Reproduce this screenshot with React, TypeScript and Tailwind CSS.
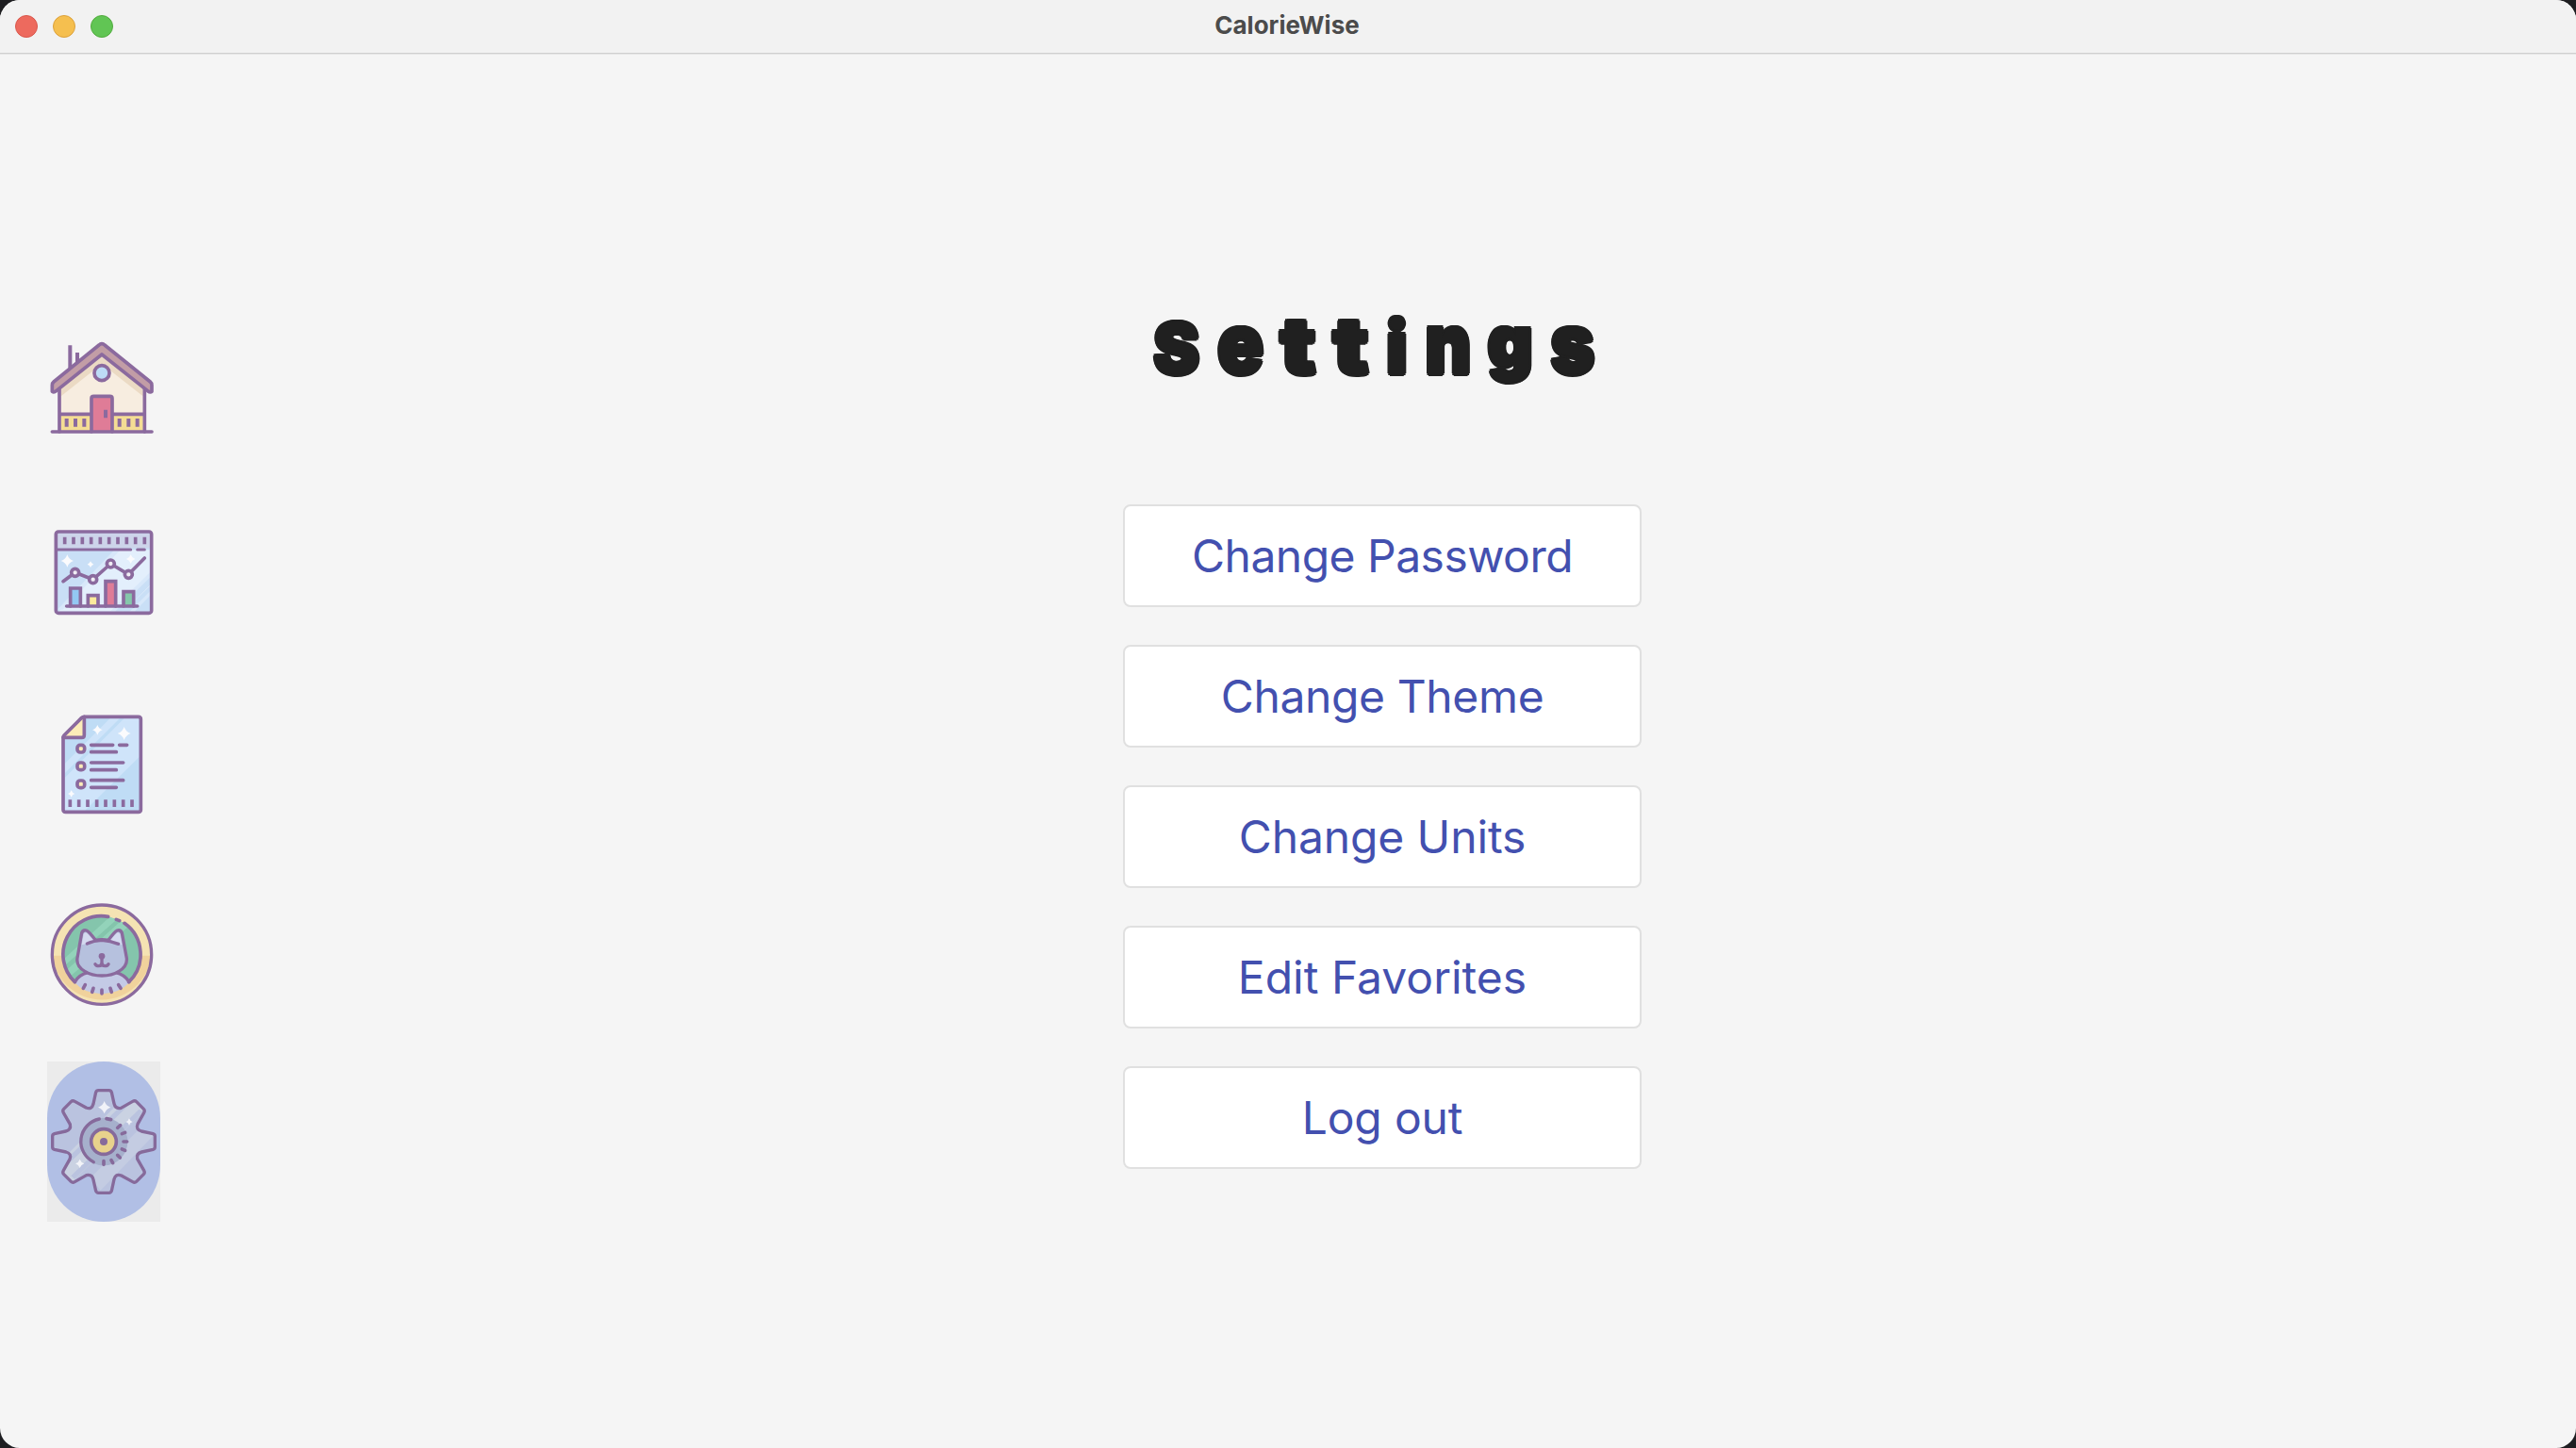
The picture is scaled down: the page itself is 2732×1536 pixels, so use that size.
import React from "react";

const LINE = "#8b6a9e";

const BUTTONS = [
  { label: "Change Password", tracking: "tracking-[-0.52px]" },
  { label: "Change Theme", tracking: "tracking-[-0.38px]" },
  { label: "Change Units", tracking: "tracking-[-0.12px]" },
  { label: "Edit Favorites", tracking: "tracking-normal" },
  { label: "Log out", tracking: "tracking-[-0.15px]" },
];

// Each letter of the display heading is sized and condensed on its own.
const HEADING = [
  { ch: "S", cls: "w-[68.4px] text-[74px]", glyph: "scale-x-[0.99] -translate-x-px" },
  { ch: "e", cls: "w-[66px] text-[88px]", glyph: "scale-x-[0.92]" },
  { ch: "t", cls: "w-[54.4px] text-[82px]", glyph: "scale-x-[1.15]" },
  { ch: "t", cls: "w-[57.8px] text-[82px]", glyph: "scale-x-[1.15]" },
  { ch: "i", cls: "w-[39.8px] text-[77px]", glyph: "scale-x-[0.98]" },
  { ch: "n", cls: "w-[69.2px] text-[89px]", glyph: "scale-x-[0.85]" },
  { ch: "g", cls: "w-[61.8px] text-[76px]", glyph: "scale-x-[0.97] -translate-y-[7px]" },
  { ch: "s", cls: "w-[71.2px] text-[88px]", glyph: "scale-x-[0.91]" },
];

function Sparkle({ x, y, r }: { x: number; y: number; r: number }) {
  const k = r * 0.25;
  return (
    <path
      fill="#fbfbfd"
      stroke="none"
      d={`M${x} ${y - r}Q${x + k} ${y - k} ${x + r} ${y}Q${x + k} ${y + k} ${x} ${y + r}Q${x - k} ${y + k} ${x - r} ${y}Q${x - k} ${y - k} ${x} ${y - r}Z`}
    />
  );
}

function HouseIcon() {
  return (
    <svg viewBox="30 3 360 360" className="size-[120px]" fill="none" stroke={LINE} strokeWidth="11" strokeLinecap="round" strokeLinejoin="round">
      <path d="M69 185L204 80L340 185V324H69Z" fill="#f7ede0" stroke="none" />
      <path d="M74 185L204 84L335 185V211L204 108L74 211Z" fill="#ebdac4" stroke="none" />
      <path d="M74 268H168V320H74ZM241 268H335V320H241Z" fill="#f4dd94" stroke="none" />
      <path d="M103 49V120M126 72V104" strokeLinecap="butt" strokeWidth="12" />
      <path d="M204 44Q209 44 213 48L358 165Q363 169 363 176V196Q358 200 350 194L204 78L59 194Q52 200 46 196V176Q46 169 51 165L195 48Q199 44 204 44Z" fill="#c29da6" />
      <path d="M69 188V324M340 188V324M69 268H168M241 268H340" />
      <path d="M171 324V218Q171 211 178 211H230Q237 211 237 218V324" fill="#df7c97" />
      <path d="M46 324H363" />
      <circle cx="204" cy="137" r="24" fill="#bddcf6" />
      <path d="M216 260V274M92 288V302M120 288V302M148 288V302M260 288V302M289 288V302M317 288V302" strokeWidth="12" strokeLinecap="square" strokeLinejoin="miter" />
    </svg>
  );
}

function ChartIcon() {
  return (
    <svg viewBox="30 3 360 360" className="size-[120px]" fill="none" stroke={LINE} strokeWidth="11" strokeLinecap="round" strokeLinejoin="round">
      <rect x="58" y="42" width="304" height="259" rx="10" fill="#c9dff6" stroke="none" />
      <path d="M262 100H357V215L272 296H66Z" fill="#e3effc" stroke="none" />
      <path d="M244 100H262L80 290H62ZM357 172V212L272 296H230ZM357 232V246L308 296H292Z" fill="#d8e8fa" stroke="none" />
      <path d="M357 188V212L272 296H246Z" fill="#c9dff6" stroke="none" />
      <rect x="63" y="47" width="294" height="47" fill="#cdd4ea" stroke="none" />
      <rect x="58" y="42" width="304" height="259" rx="8" />
      <path d="M63 99H296M317 99H340" strokeWidth="9" />
      <path d="M86 59V82M114 59V82M142 59V82M170 59V82M199 59V82M227 59V82M255 59V82M283 59V82M311 59V82M340 59V82" strokeWidth="11" strokeLinecap="butt" />
      <Sparkle x={94} y={135} r={20} />
      <Sparkle x={168} y={146} r={10} />
      <Sparkle x={296} y={129} r={14} />
      <path d="M81 200L119 172L176 194L232 144L289 178L340 126" strokeWidth="11" />
      <g fill="#f0edf4" strokeWidth="11">
        <circle cx="119" cy="172" r="12" />
        <circle cx="176" cy="194" r="12" />
        <circle cx="232" cy="144" r="12" />
        <circle cx="289" cy="178" r="12" />
      </g>
      <g strokeLinejoin="miter">
        <path d="M104 279V222H136V279" fill="#93c8f3" />
        <path d="M160 279V245H192V279" fill="#fceb9c" />
        <path d="M216 279V200H248V279" fill="#df7c97" />
        <path d="M273 279V233H305V279" fill="#85c7ab" />
      </g>
      <path d="M92 279H317" />
    </svg>
  );
}

function DocumentIcon() {
  return (
    <svg viewBox="0 18 360 360" className="size-[120px]" fill="none" stroke={LINE} strokeWidth="11" strokeLinecap="round" strokeLinejoin="round">
      <path d="M51 112L118 46H290Q298 46 298 54V342Q298 349 290 349H59Q51 349 51 342Z" fill="#bfdcf5" stroke="none" />
      <path d="M250 46H293V174L120 345H56V240Z" fill="#cfe4fa" stroke="none" />
      <path d="M205 46H236L56 226V195Z" fill="#cfe4fa" stroke="none" />
      <path d="M51 112L118 46V112Z" fill="#fcecb8" stroke="none" />
      <path d="M51 112Q51 108 54 105L109 50Q113 46 118 46H290Q298 46 298 54V342Q298 349 290 349H59Q51 349 51 342Z" />
      <path d="M118 46V104Q118 112 110 112H51" />
      <Sparkle x={160} y={88} r={16} />
      <Sparkle x={245} y={99} r={21} />
      <Sparkle x={77} y={291} r={11} />
      <g fill="#fcecb8" strokeWidth="11">
        <rect x="96" y="136" width="23" height="23" rx="9" />
        <rect x="96" y="192" width="23" height="23" rx="9" />
        <rect x="96" y="249" width="23" height="23" rx="9" />
      </g>
      <path d="M140 136H209M230 136H254M140 158H220M140 192H242M140 215H220M140 248H242M140 271H220" strokeWidth="11" />
      <path d="M73 310V333M101 310V333M129 310V333M158 310V333M186 310V333M214 310V333M242 310V333M270 310V333" strokeWidth="11" strokeLinecap="butt" />
    </svg>
  );
}

function CatIcon() {
  return (
    <svg viewBox="30 18 360 360" className="size-[120px]" fill="none" stroke={LINE} strokeWidth="10" strokeLinecap="round" strokeLinejoin="round">
      <circle cx="204" cy="203" r="158" fill="#f5e3b3" stroke="none" />
      <path d="M47 206A158 158 0 0 0 361 206Z" fill="#f0d29c" stroke="none" />
      <circle cx="204" cy="203" r="158" />
      <circle cx="204" cy="203" r="122" fill="#84c5ac" stroke="none" />
      <path d="M228 84Q262 92 288 114L103 272Q86 240 84 216Z" fill="#95d4bb" stroke="none" opacity=".9" />
      <path d="M250 92L262 98L92 252L86 238Z" fill="#84c5ac" stroke="none" />
      <path d="M118 292Q134 266 164 260H244Q274 266 291 292Q262 326 204 328Q146 326 118 292Z" fill="#c4cae6" stroke="none" />
      <path d="M118 290A122 122 0 0 1 224 82M290 290A122 122 0 0 0 276 103M250 91L260 95" strokeWidth="11" />
      <path d="M118 290Q132 266 160 260M291 290Q276 266 248 260" />
      <path d="M140 134Q144 123 155 126Q164 130 184 157Q204 153 225 157Q244 130 253 126Q264 123 268 134L283 214Q286 240 258 256Q236 270 204 270Q172 270 150 256Q122 240 126 214Z" fill="#b6c1de" />
      <path d="M146 138Q152 128 160 138L176 156L157 168L140 172ZM262 138Q256 128 248 138L232 156L251 168L268 172Z" fill="#d5daf0" stroke="none" />
      <path d="M157 168Q178 158 204 157Q230 158 257 169" />
      <path d="M204 212V228M183 233Q186 239 194 239Q204 239 204 228Q204 239 214 239Q222 239 225 233" />
      <circle cx="204" cy="208" r="10" fill={LINE} stroke="none" />
      <path d="M151 299L145 310M177 310L173 322M204 315V327M231 310L235 322M257 299L264 310" strokeWidth="11" />
    </svg>
  );
}

// One quarter of the cog outline, rotated four times around (210, 285).
const QUARTER: [string, number[]][] = [
  ["L", [227, 122]],
  ["Q", [233, 122, 235, 128]],
  ["L", [243, 164]],
  ["Q", [247, 182, 265, 178]],
  ["L", [302, 157]],
  ["Q", [309, 153, 314, 158]],
  ["L", [337, 181]],
  ["Q", [342, 186, 338, 193]],
  ["L", [318, 229]],
  ["Q", [311, 247, 330, 252]],
  ["L", [367, 260]],
  ["Q", [373, 262, 373, 268]],
  ["L", [373, 285]],
];

const cogOutline =
  "M210 122" +
  [0, 1, 2, 3]
    .map((turn) =>
      QUARTER.map(([op, pts]) => {
        const out: number[] = [];
        for (let i = 0; i < pts.length; i += 2) {
          let dx = pts[i] - 210;
          let dy = pts[i + 1] - 285;
          for (let t = 0; t < turn; t++) [dx, dy] = [-dy, dx];
          out.push(210 + dx, 285 + dy);
        }
        return op + out.join(" ");
      }).join("")
    )
    .join("") +
  "Z";

function GearIcon() {
  return (
    <svg viewBox="30 105 360 360" className="size-[120px]" fill="none" stroke="#866a9b" strokeWidth="10" strokeLinecap="round" strokeLinejoin="round">
      <defs>
        <clipPath id="cog">
          <path d={cogOutline} />
        </clipPath>
      </defs>
      <path d={cogOutline} fill="#bac3df" stroke="none" />
      <g clipPath="url(#cog)" stroke="none" fill="#cad2e2">
        <path d="M290 130L346 180L100 424L60 360Z" />
        <path d="M346 222L372 262L200 440L168 400Z" fill="#c4cce2" />
        <path d="M276 160L288 170L92 362L82 350Z" fill="#bac3df" />
        <path d="M322 182L336 190L118 404L106 394Z" fill="#bac3df" />
      </g>
      <path d={cogOutline} />
      <circle cx="210" cy="285" r="76" fill="#a6b0cc" stroke="none" />
      <path d="M196 213A73 73 0 0 0 178 350" />
      <path d="M219 212L233 215M254 241L263 233M268 260L278 256M273 285H284M268 309L278 313M254 328L262 336M234 344L239 353M210 347V358" strokeWidth="11" />
      <circle cx="210" cy="285" r="40" fill="#e8d28c" strokeWidth="11" />
      <circle cx="210" cy="285" r="12" fill="#866a9b" stroke="none" />
      <g opacity=".85">
        <Sparkle x={212} y={176} r={20} />
        <Sparkle x={291} y={222} r={11} />
        <Sparkle x={134} y={355} r={14} />
      </g>
    </svg>
  );
}

function NavItem({ active, children }: { active?: boolean; children: React.ReactNode }) {
  return (
    <div className={active ? "h-[170px] w-[120px] bg-[#ebebeb]" : "h-[170px] w-[120px]"}>
      <div className={active ? "flex h-full items-center justify-center rounded-[60px] bg-[#b1bfe5]" : "flex h-full items-center justify-center"}>
        {children}
      </div>
    </div>
  );
}

export default function App() {
  return (
    <div className="h-[1536px] w-[2732px] bg-[#1e1e21] font-['Inter',sans-serif]">
      <div className="flex h-full flex-col overflow-hidden rounded-[21px] bg-[#f5f5f5]">
        <header className="grid h-[57px] shrink-0 grid-cols-3 items-center border-b border-[#cfcfcf] bg-[#f2f2f2] shadow-[0_1px_0_#e6e6e6]">
          <div className="flex gap-4 pl-4">
            <span className="size-6 rounded-full border border-[#d9574c] bg-[#ed6a5e]" />
            <span className="size-6 rounded-full border border-[#dba03b] bg-[#f5bf4f]" />
            <span className="size-6 rounded-full border border-[#52ab3e] bg-[#61c554]" />
          </div>
          <h1 className="pr-0.5 pb-[3px] text-center text-[26px] leading-8 font-bold text-[#4b4b4b]">CalorieWise</h1>
        </header>
        <div className="flex flex-1">
          <nav className="flex w-[200px] flex-col gap-[30px] pt-[269px] pl-[50px]">
            <NavItem><HouseIcon /></NavItem>
            <NavItem><ChartIcon /></NavItem>
            <NavItem><DocumentIcon /></NavItem>
            <NavItem><CatIcon /></NavItem>
            <NavItem active><GearIcon /></NavItem>
          </nav>
          <main className="flex flex-1 flex-col items-center pt-[247px]">
            <h2 className="mb-[111px] flex h-[120px] items-baseline pr-[14px] leading-[120px] font-black text-[#202020] [text-shadow:2.5px_0_0_#202020,-2.5px_0_0_#202020,0_2.5px_0_#202020,0_-2.5px_0_#202020,1.8px_1.8px_0_#202020,-1.8px_1.8px_0_#202020,1.8px_-1.8px_0_#202020,-1.8px_-1.8px_0_#202020]">
              {HEADING.map((l, i) => (
                <span key={i} className={`flex shrink-0 justify-center ${l.cls}`}>
                  <span className={l.glyph}>{l.ch}</span>
                </span>
              ))}
            </h2>
            <div className="flex w-[550px] flex-col gap-10">
              {BUTTONS.map((b) => (
                <button
                  key={b.label}
                  className={`flex h-[109px] items-center justify-center rounded-lg border-2 border-[#e0e0e0] bg-white text-[48px] leading-none text-[#4350af] ${b.tracking}`}
                >
                  {b.label}
                </button>
              ))}
            </div>
          </main>
        </div>
      </div>
    </div>
  );
}
